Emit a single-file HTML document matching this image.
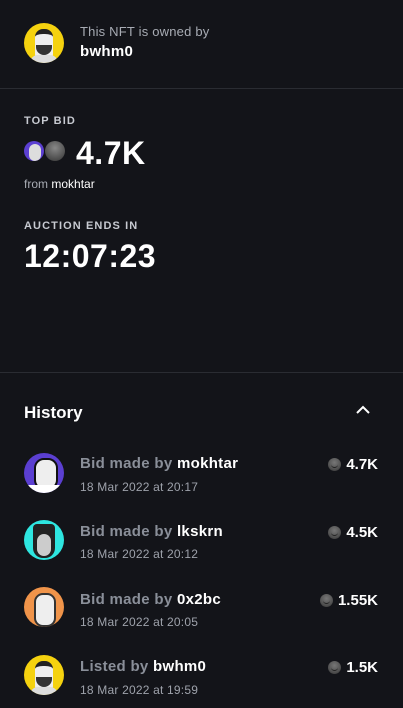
<!DOCTYPE html>
<html><head><style>
body{margin:0;width:403px;height:708px;background:#131419;font-family:"Liberation Sans",sans-serif;color:#fff;overflow:hidden;position:relative}
.a{position:absolute}
.av{position:absolute;left:24px;width:40px;height:40px;border-radius:50%;overflow:hidden}
.line{position:absolute;left:0;width:403px;height:1px;background:#2a2c32}
.lbl{font-size:11px;font-weight:bold;letter-spacing:1.1px;color:#c7cad1}
.big{font-size:32px;font-weight:bold;letter-spacing:0.5px}
.g{color:#8a8f99}
.row .t{position:absolute;left:80px;font-size:15px;font-weight:bold;letter-spacing:0.3px}
.row .d{position:absolute;left:80px;font-size:12px;color:#9ea2ab;letter-spacing:0.2px}
.amt{position:absolute;right:25px;font-size:15px;font-weight:bold;display:flex;align-items:center}
.coin{display:inline-block;width:13px;height:13px;border-radius:50%;background:radial-gradient(circle at 50% 35%,#777 0,#555 55%,#333 100%);margin-right:5px;position:relative}
.coin:after{content:"";position:absolute;left:3px;top:5px;width:7px;height:4px;border-bottom:1.5px solid #222;border-radius:0 0 5px 5px}
</style></head><body>
<div class="av" style="top:23px;background:#f5d20f"><div style="position:absolute;left:11px;top:6px;width:18px;height:26px;background:#eee;border-radius:8px 8px 6px 6px;border-top:5px solid #222"></div><div style="position:absolute;left:12px;top:22px;width:16px;height:10px;background:#333;border-radius:0 0 8px 8px"></div><div style="position:absolute;left:6px;top:32px;width:28px;height:10px;background:#ddd;border-radius:8px 8px 0 0"></div></div>
<div class="a" style="left:80px;top:24px;font-size:13px;color:#a8acb4;letter-spacing:0.2px">This NFT is owned by</div>
<div class="a" style="left:80px;top:43px;font-size:15px;font-weight:bold;letter-spacing:0.3px">bwhm0</div>
<div class="line" style="top:88px"></div>
<div class="a lbl" style="left:24px;top:115px">TOP BID</div>
<div class="a" style="left:24px;top:141px;width:20px;height:20px;border-radius:50%;background:#5b3fd1;overflow:hidden"><div style="position:absolute;left:5px;top:3px;width:12px;height:17px;background:#ddd;border-radius:6px"></div></div>
<div class="a" style="left:45px;top:141px;width:20px;height:20px;border-radius:50%;background:radial-gradient(circle at 50% 35%,#888,#555 60%,#333)"></div>
<div class="a big" style="left:76px;top:135px">4.7K</div>
<div class="a" style="left:24px;top:177px;font-size:12px"><span style="color:#a8acb4">from </span>mokhtar</div>
<div class="a lbl" style="left:24px;top:220px">AUCTION ENDS IN</div>
<div class="a big" style="left:24px;top:238px">12:07:23</div>
<div class="line" style="top:372px"></div>
<div class="a" style="left:24px;top:403px;font-size:17px;font-weight:bold">History</div>
<svg class="a" style="left:356px;top:405px" width="14" height="10" viewBox="0 0 14 10"><path d="M1 8 L7 2 L13 8" stroke="#fff" stroke-width="2" fill="none"/></svg>

<div class="row">
<div class="av" style="top:453px;background:#5b3fd1"><div style="position:absolute;left:10px;top:5px;width:20px;height:28px;background:#eee;border-radius:10px;border:2px solid #111"></div><div style="position:absolute;left:4px;top:32px;width:32px;height:10px;background:#fff"></div></div>
<div class="t" style="top:455px"><span class="g">Bid made by</span> mokhtar</div>
<div class="d" style="top:480px">18 Mar 2022 at 20:17</div>
<div class="amt" style="top:456px"><span class="coin"></span>4.7K</div>

<div class="av" style="top:520px;background:#2ee6e0"><div style="position:absolute;left:9px;top:4px;width:22px;height:34px;background:#222;border-radius:4px 4px 10px 10px"></div><div style="position:absolute;left:13px;top:14px;width:14px;height:22px;background:#ccc;border-radius:7px"></div></div>
<div class="t" style="top:523px"><span class="g">Bid made by</span> lkskrn</div>
<div class="d" style="top:547px">18 Mar 2022 at 20:12</div>
<div class="amt" style="top:524px"><span class="coin"></span>4.5K</div>

<div class="av" style="top:587px;background:#f0944a"><div style="position:absolute;left:10px;top:6px;width:18px;height:30px;background:#eee;border-radius:9px;border:2px solid #333"></div></div>
<div class="t" style="top:591px"><span class="g">Bid made by</span> 0x2bc</div>
<div class="d" style="top:615px">18 Mar 2022 at 20:05</div>
<div class="amt" style="top:592px"><span class="coin"></span>1.55K</div>

<div class="av" style="top:655px;background:#f5d20f"><div style="position:absolute;left:11px;top:6px;width:18px;height:26px;background:#eee;border-radius:8px 8px 6px 6px;border-top:5px solid #222"></div><div style="position:absolute;left:12px;top:22px;width:16px;height:10px;background:#333;border-radius:0 0 8px 8px"></div><div style="position:absolute;left:6px;top:32px;width:28px;height:10px;background:#ddd;border-radius:8px 8px 0 0"></div></div>
<div class="t" style="top:658px"><span class="g">Listed by</span> bwhm0</div>
<div class="d" style="top:683px">18 Mar 2022 at 19:59</div>
<div class="amt" style="top:659px"><span class="coin"></span>1.5K</div>
</div>
</body></html>
